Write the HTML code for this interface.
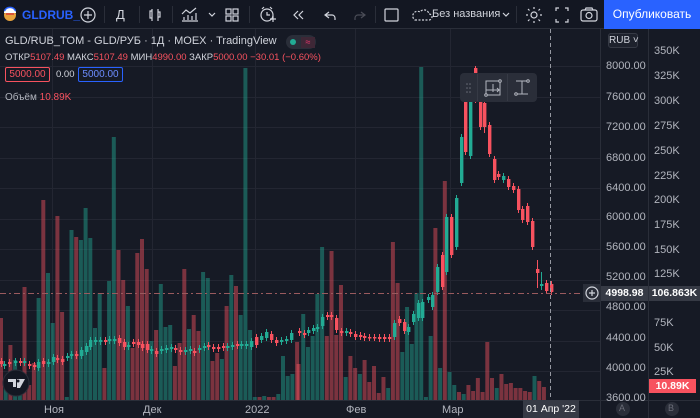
<!DOCTYPE html>
<html><head><meta charset="utf-8"><style>
*{margin:0;padding:0;box-sizing:border-box}
body{width:700px;height:418px;background:#161a25;font-family:"Liberation Sans","DejaVu Sans",sans-serif;overflow:hidden;position:relative;color:#b2b5be}
.tb{position:absolute;left:0;top:0;width:700px;height:29px;background:#131722;border-bottom:1px solid #2a2e39}
.ab{position:absolute;white-space:nowrap}
.pl{position:absolute;left:606px;font-size:11px;color:#b2b5be}
.vl{position:absolute;left:654px;font-size:11px;color:#b2b5be}
.tl{position:absolute;top:404px;font-size:11px;color:#b2b5be}
.sep{position:absolute;top:6px;width:1px;height:17px;background:#2a2e39}
</style></head><body>
<svg id="ch" width="700" height="418" style="position:absolute;left:0;top:0">
<g stroke="#232632" stroke-width="1">
<line x1="0" x2="600" y1="66.5" y2="66.5"/><line x1="0" x2="600" y1="97.5" y2="97.5"/><line x1="0" x2="600" y1="127.5" y2="127.5"/><line x1="0" x2="600" y1="158.5" y2="158.5"/><line x1="0" x2="600" y1="188.5" y2="188.5"/><line x1="0" x2="600" y1="219.5" y2="219.5"/><line x1="0" x2="600" y1="249.5" y2="249.5"/><line x1="0" x2="600" y1="280.5" y2="280.5"/><line x1="0" x2="600" y1="310.5" y2="310.5"/><line x1="0" x2="600" y1="341.5" y2="341.5"/><line x1="0" x2="600" y1="371.5" y2="371.5"/>
<line x1="52.5" x2="52.5" y1="29" y2="400"/><line x1="152.5" x2="152.5" y1="29" y2="400"/><line x1="255.5" x2="255.5" y1="29" y2="400"/><line x1="355.5" x2="355.5" y1="29" y2="400"/><line x1="450.5" x2="450.5" y1="29" y2="400"/>
</g>
<g id="vol"></g><g id="cdl"></g>
<line x1="0" x2="600" y1="293.5" y2="293.5" stroke="#9a5a5e" stroke-width="1" stroke-dasharray="6 3 2 3"/>
<line x1="550.5" x2="550.5" y1="29" y2="400" stroke="#9598a1" stroke-width="1" stroke-dasharray="4 3"/>
<line x1="600.5" x2="600.5" y1="29" y2="418" stroke="#2a2e39"/>
<line x1="648.5" x2="648.5" y1="29" y2="418" stroke="#2a2e39"/>
<line x1="0" x2="700" y1="400.5" y2="400.5" stroke="#2a2e39"/>
<circle cx="623" cy="409" r="7" fill="#2a2e39"/><circle cx="672" cy="409" r="7" fill="#2a2e39"/>
<rect x="583" y="284" width="18" height="18" fill="#2a2e39"/>
<circle cx="592" cy="293" r="6" fill="none" stroke="#d1d4dc" stroke-width="1.2"/><path d="M592 290v6M589 293h6" stroke="#d1d4dc" stroke-width="1.2"/>
<circle cx="16" cy="383" r="13" fill="#131722" stroke="#2a2e39"/>
<path d="M8 379h8v8h-3v-5h-5z M17 379h8l-5 9h-3z" fill="#d1d4dc"/><circle cx="18" cy="381" r="1.5" fill="#131722"/>
<rect x="460" y="73" width="77" height="29" rx="4" fill="#2a2e39"/>
<line x1="477.5" x2="477.5" y1="74" y2="101" stroke="#363a45"/><line x1="507.5" x2="507.5" y1="74" y2="101" stroke="#363a45"/>
<g fill="#6a6d78"><circle cx="467" cy="84" r=".8"/><circle cx="470" cy="84" r=".8"/><circle cx="467" cy="88" r=".8"/><circle cx="470" cy="88" r=".8"/><circle cx="467" cy="92" r=".8"/><circle cx="470" cy="92" r=".8"/></g>
<g stroke="#b2b5be" fill="none" stroke-width="1"><rect x="486" y="81" width="14" height="14"/><path d="M486 90h14M493 84v8M497 88l2 2-2 2"/><circle cx="486" cy="95" r="1.3" fill="#2a2e39"/><circle cx="500" cy="81" r="1.3" fill="#2a2e39"/>
<path d="M516 81h12M522 81v13M516 94h12"/><circle cx="528" cy="81" r="1.3" fill="#2a2e39"/><circle cx="516" cy="94" r="1.3" fill="#2a2e39"/></g>
</svg>
<div class="tb">
<svg width="700" height="29" style="position:absolute;left:0;top:0">
<circle cx="10" cy="15" r="6" fill="#e8a33d"/><path d="M4 13a6 6 0 0 1 12 0z" fill="#fff"/><path d="M4.5 11a6 6 0 0 1 11 0" stroke="#2962ff" stroke-width="1.5" fill="none"/><path d="M6 14h8" stroke="#d43a3a" stroke-width="1.5"/>
<g stroke="#d1d4dc" fill="none" stroke-width="1.2">
<circle cx="88" cy="15" r="7"/><path d="M88 11v8M84 15h8"/>
<path d="M152 9v12M152 11h-2v7h2M158 9v12M158 12h2v5h-2" />
<path d="M184 20v-3M188 20v-5M192 20v-4M196 20v-7M182 14l4-4 4 3 6-5M182 21h16"/>
<path d="M209 13l3 3 3-3"/>
<rect x="226" y="9" width="5" height="5"/><rect x="233" y="9" width="5" height="5"/><rect x="226" y="16" width="5" height="5"/><rect x="233" y="16" width="5" height="5"/>
<circle cx="267" cy="15" r="6"/><path d="M267 12v3h3M262 9l2-2M272 9l-2-2M270 19h6M273 16v6"/>
<path d="M298 11l-4 4 4 4M303 11l-4 4 4 4"/>
<path d="M329 12l-4 3 4 3M325 15h7a3 3 0 0 1 3 3v2" />
<path d="M361 12l4 3-4 3M365 15h-7a3 3 0 0 0-3 3v2" stroke="#4a4d57"/>
<rect x="385" y="9" width="13" height="12" rx="1"/>
<path d="M415 20h14a3 3 0 0 0 0-6a5 5 0 0 0-9-2a4 4 0 0 0-5 8z" stroke-dasharray="2 1.5"/>
<path d="M503 13l3 3 3-3"/>
<circle cx="534" cy="15" r="3"/><path d="M534 7v2M534 21v2M526 15h2M540 15h2M528 9l1.5 1.5M538.5 19.5l1.5 1.5M540 9l-1.5 1.5M529.5 19.5L528 21"/>
<path d="M556 11v-3h3M565 8h3v3M568 19v3h-3M559 22h-3v-3"/>
<rect x="581" y="10" width="16" height="11" rx="2"/><circle cx="589" cy="15.5" r="3"/><path d="M585 10l1-2h6l1 2"/>
</g></svg>
<div class="ab" style="left:22px;top:8px;font-size:12px;font-weight:bold;color:#2962ff">GLDRUB_</div>
<div class="ab" style="left:116px;top:7px;font-size:13px;color:#d1d4dc">Д</div>
<div class="ab" style="left:432px;top:8px;font-size:11px;color:#d1d4dc">Без названия</div>
<div class="sep" style="left:104px"></div><div class="sep" style="left:139px"></div><div class="sep" style="left:172px"></div><div class="sep" style="left:249px"></div><div class="sep" style="left:375px"></div><div class="sep" style="left:516px"></div>
<div class="ab" style="left:604px;top:0;width:96px;height:29px;background:#2962ff;color:#fff;font-size:12px;line-height:29px;text-align:center">Опубликовать</div>
</div>
<div class="ab" style="left:5px;top:35px;font-size:11px;color:#d1d4dc">GLD/RUB_TOM - GLD/РУБ · 1Д · MOEX · TradingView</div>
<div class="ab" style="left:286px;top:35px;width:30px;height:14px;border-radius:7px;background:#2a2e39"></div>
<div class="ab" style="left:290px;top:39px;width:6px;height:6px;border-radius:3px;background:#22ab94"></div>
<div class="ab" style="left:301px;top:37px;width:14px;height:11px;background:#3e2736;color:#f23670;font-size:9px;text-align:center">≈</div>
<div class="ab" style="left:5px;top:52px;font-size:9.5px;color:#d1d4dc">ОТКР<span style="color:#f7525f">5107.49</span> МАКС<span style="color:#f7525f">5107.49</span> МИН<span style="color:#f7525f">4990.00</span> ЗАКР<span style="color:#f7525f">5000.00 −30.01 (−0.60%)</span></div>
<div class="ab" style="left:5px;top:67px;width:45px;height:15px;border:1px solid #f7525f;border-radius:2px;color:#f7525f;font-size:10px;line-height:13px;text-align:center">5000.00</div>
<div class="ab" style="left:56px;top:69px;font-size:9.5px;color:#d1d4dc">0.00</div>
<div class="ab" style="left:78px;top:67px;width:45px;height:15px;border:1px solid #2962ff;border-radius:2px;color:#6c8cff;font-size:10px;line-height:13px;text-align:center">5000.00</div>
<div class="ab" style="left:5px;top:92px;font-size:10px;color:#b2b5be">Объём <span style="color:#f7525f">10.89K</span></div>
<div class="ab" style="left:608px;top:33px;width:30px;height:15px;border:1px solid #363a45;border-radius:3px;background:#1e222d;color:#d1d4dc;font-size:10px;line-height:13px;text-align:center">RUB ˅</div>
<div class="pl" style="top:60px">8000.00</div><div class="pl" style="top:91px">7600.00</div><div class="pl" style="top:121px">7200.00</div><div class="pl" style="top:152px">6800.00</div><div class="pl" style="top:182px">6400.00</div><div class="pl" style="top:211px">6000.00</div><div class="pl" style="top:241px">5600.00</div><div class="pl" style="top:271px">5200.00</div><div class="pl" style="top:301px">4800.00</div><div class="pl" style="top:332px">4400.00</div><div class="pl" style="top:362px">4000.00</div><div class="pl" style="top:392px">3600.00</div>
<div class="vl" style="top:45px">350K</div><div class="vl" style="top:70px">325K</div><div class="vl" style="top:95px">300K</div><div class="vl" style="top:120px">275K</div><div class="vl" style="top:145px">250K</div><div class="vl" style="top:170px">225K</div><div class="vl" style="top:194px">200K</div><div class="vl" style="top:219px">175K</div><div class="vl" style="top:244px">150K</div><div class="vl" style="top:268px">125K</div><div class="vl" style="top:317px">75K</div><div class="vl" style="top:342px">50K</div><div class="vl" style="top:366px">25K</div>
<div class="ab" style="left:601px;top:286px;width:47px;height:15px;background:#363a45;color:#fff;font-size:10.5px;line-height:15px;text-align:center;font-weight:bold">4998.98</div>
<div class="ab" style="left:649px;top:286px;width:51px;height:15px;background:#363a45;color:#fff;font-size:10.5px;line-height:15px;text-align:center;font-weight:bold">106.863K</div>
<div class="ab" style="left:649px;top:379px;width:47px;height:14px;background:#f7525f;color:#fff;font-size:10.5px;line-height:14px;text-align:center;font-weight:bold">10.89K</div>
<div class="tl" style="left:44px">Ноя</div><div class="tl" style="left:143px">Дек</div><div class="tl" style="left:245px">2022</div><div class="tl" style="left:346px">Фев</div><div class="tl" style="left:442px">Мар</div>
<div class="ab" style="left:523px;top:400px;width:56px;height:18px;background:#363a45;color:#fff;font-size:10.5px;line-height:18px;text-align:center">01 Апр '22</div>
<div class="ab" style="left:619px;top:403px;font-size:9px;color:#6a6d78">A</div><div class="ab" style="left:668px;top:403px;font-size:9px;color:#6a6d78">B</div>
<script>
var G='rgba(34,171,148,0.45)',R='rgba(247,82,95,0.45)';
var v1="318r383g345r360g383g287r385r363r298g200r273g323g216r312r397g230g237r240g208g238g328g293g368r281g137g250r280r306g348r253r239r269r341g330r284g327g325g366r343r269r329g315r331r272g278g361r353r359g306r275g286r315g68g330g397g397r396g397r397r394g356g376g374g342r".match(/\d+[rg]/g);
var v2="364r314g347g336g294g247g336r251r335r285r377g356r368r374g360r382r366r393r377r388g242r283r352g307g344g293g67g397g336g228r368g181r372g385g392r394g385r391r378r392r342r378r388g374r384r383r388r388r391r392r376g381r387r".match(/\d+[rg]/g);
var s='';
v1.forEach(function(t,i){var x=i*4.7-1,y=parseInt(t);s+='<rect x="'+x+'" y="'+y+'" width="4" height="'+(400-y)+'" fill="'+(t.slice(-1)=='g'?G:R)+'"/>';});
v2.forEach(function(t,i){var x=296.5+i*4.72,y=parseInt(t);s+='<rect x="'+x+'" y="'+y+'" width="4" height="'+(400-y)+'" fill="'+(t.slice(-1)=='g'?G:R)+'"/>';});
document.getElementById('vol').innerHTML=s;
var c=[[0,361,364,'r'],[3,364,366,'g'],[8,362,364,'r'],[14,361,363,'g'],[19,361,363,'r'],[23,361,363,'g'],[28,364,366,'r'],[33,365,367,'r'],[37,362,368,'g'],[42,361,364,'r'],[47,362,364,'g'],[52,357,362,'g'],[56,358,360,'r'],[61,359,362,'r'],[66,356,358,'g'],[70,354,356,'g'],[75,354,356,'r'],[80,350,356,'g'],[85,346,352,'g'],[89,340,347,'g'],[94,340,342,'g'],[99,340,342,'g'],[104,340,342,'r'],[108,339,341,'g'],[113,339,341,'g'],[118,338,343,'r'],[123,342,347,'r'],[127,345,347,'g'],[132,342,344,'r'],[137,342,345,'r'],[141,344,348,'r'],[146,344,350,'r'],[150,349,351,'g'],[155,351,354,'r'],[160,349,351,'g'],[165,348,350,'g'],[170,347,349,'g'],[174,348,350,'r'],[179,350,352,'r'],[184,350,352,'g'],[189,349,351,'g'],[193,351,353,'r'],[198,348,350,'g'],[203,346,348,'g'],[207,345,347,'r'],[212,347,349,'r'],[217,347,349,'r'],[222,346,348,'r'],[226,346,348,'g'],[231,345,347,'g'],[236,344,346,'r'],[240,344,346,'g'],[245,344,346,'g'],[250,341,347,'g'],[255,337,345,'r'],[260,336,340,'g'],[265,332,338,'g'],[270,334,340,'r'],[275,340,343,'r'],[280,340,342,'g'],[285,339,341,'g'],[290,333,340,'g'],[298,331,333,'r'],[303,333,335,'r'],[307,330,333,'g'],[312,328,331,'g'],[316,327,329,'g'],[321,317,326,'g'],[326,315,317,'r'],[330,315,317,'r'],[335,318,330,'r'],[340,331,333,'r'],[345,331,333,'g'],[349,332,334,'r'],[354,334,337,'r'],[359,335,337,'r'],[363,336,338,'r'],[368,337,338,'r'],[373,337,338,'r'],[378,337,339,'r'],[383,337,339,'r'],[388,337,339,'r'],[393,323,337,'g'],[398,319,323,'r'],[403,322,331,'r'],[407,327,332,'g'],[412,314,322,'g'],[417,303,318,'g'],[421,302,318,'g'],[427,297,300,'g'],[431,295,307,'g'],[436,267,292,'g'],[441,255,287,'r'],[445,217,272,'g'],[450,217,255,'r'],[455,198,247,'g'],[460,137,183,'g'],[464,102,152,'r'],[469,100,156,'g'],[474,68,100,'r'],[479,102,127,'r'],[483,103,127,'r'],[488,125,154,'r'],[493,159,180,'r'],[497,174,177,'r'],[502,176,180,'g'],[507,179,187,'r'],[512,186,190,'r'],[517,189,210,'r'],[521,209,220,'r'],[526,206,222,'r'],[531,221,247,'r'],[536,269,273,'r'],[540,284,286,'g'],[545,283,291,'r'],[550,284,292,'r']];
var h='';
c.forEach(function(a){var col=a[3]=='g'?'#22ab94':'#f7525f';var w1=a[1]-3,w2=a[2]+3;if(a[0]==536){w1=260;w2=288}if(a[0]==540){w1=272;w2=290}if(a[0]==474){w1=66}if(a[0]==483){w2=133}
h+='<line x1="'+(a[0]+1.5)+'" x2="'+(a[0]+1.5)+'" y1="'+w1+'" y2="'+w2+'" stroke="'+col+'" stroke-width="1"/><rect x="'+a[0]+'" y="'+a[1]+'" width="3.4" height="'+Math.max(1.5,a[2]-a[1])+'" fill="'+col+'"/>';});
document.getElementById('cdl').innerHTML=h;
</script>
</body></html>
